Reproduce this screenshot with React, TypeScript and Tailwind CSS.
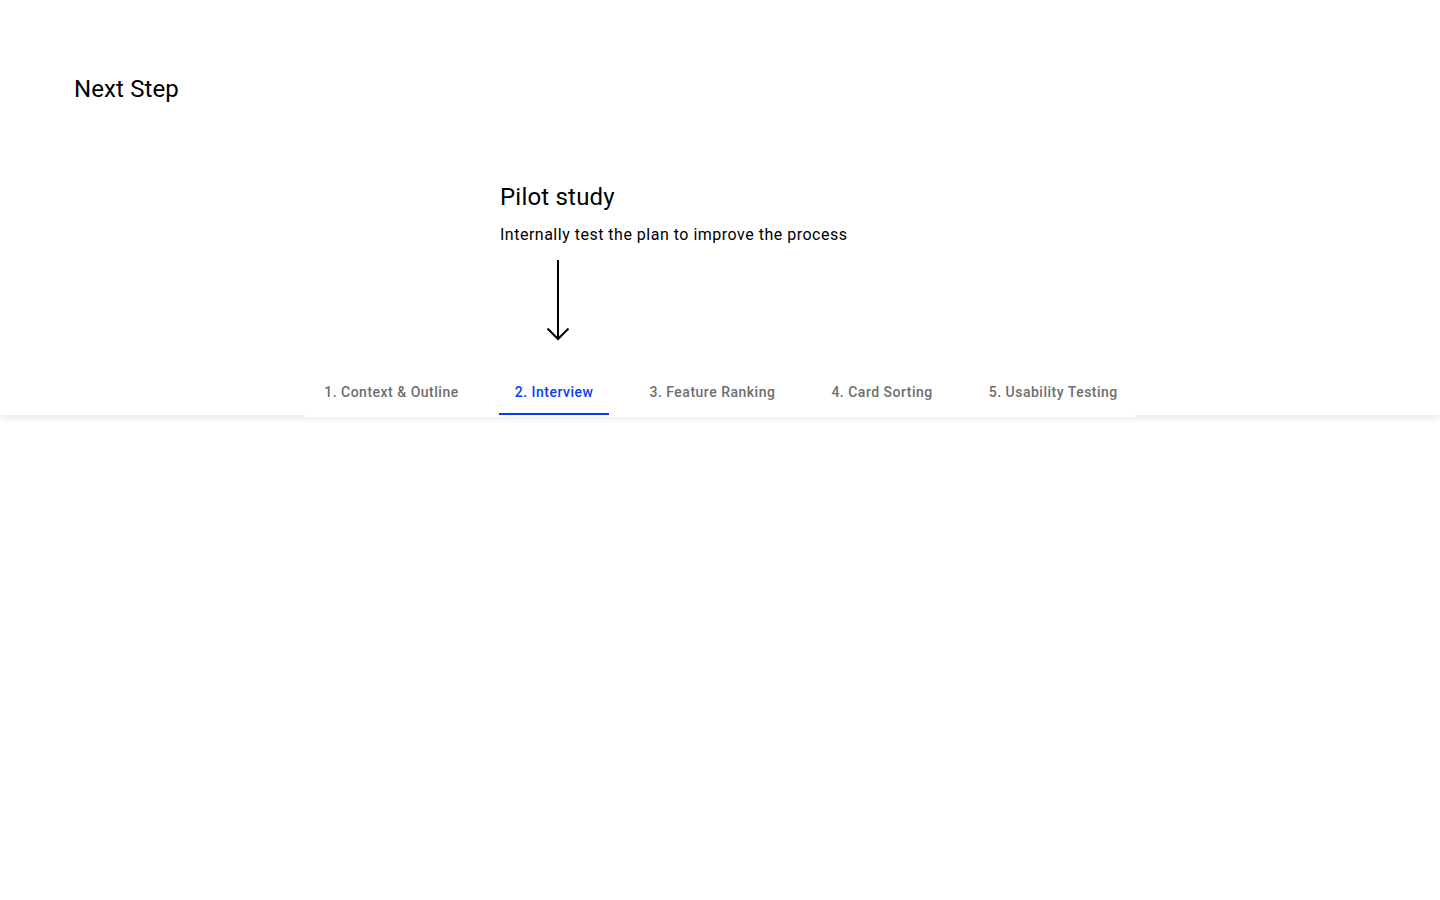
import React from "react";

const tabs = [
  "1. Context & Outline",
  "2. Interview",
  "3. Feature Ranking",
  "4. Card Sorting",
  "5. Usability Testing",
];

export default function App() {
  return (
    <div
      className="min-h-screen bg-white text-black"
      style={{ fontFamily: "Roboto, 'Noto Sans', sans-serif" }}
    >
      <div className="relative bg-white shadow-[0_3px_8px_rgba(0,0,0,0.10)]">
        <div className="pl-[74px] pt-[73px]">
          <h1 className="text-[24px] leading-[32px] font-normal tracking-[0.12px]">Next Step</h1>
        </div>
        <div className="pl-[500px] pt-[76px]">
          <h2 className="text-[24px] leading-[32px] font-normal tracking-[0.2px]">Pilot study</h2>
          <p className="mt-[10px] text-[16px] leading-[24px] tracking-[0.5px]">
            Internally test the plan to improve the process
          </p>
          <div className="mt-[13px] ml-[46px] h-[81px] w-[24px]">
            <svg width="24" height="81" viewBox="0 0 24 81" fill="none">
              <path d="M12 0 V79" stroke="black" strokeWidth="2" />
              <path
                d="M1.5 68.5 L12 79 L22.5 68.5"
                stroke="black"
                strokeWidth="2"
                strokeLinejoin="miter"
              />
            </svg>
          </div>
        </div>
        <div className="mt-[26px] flex justify-center">
          <div className="relative z-10 -mb-[2px] flex gap-6 bg-white pl-[3px] pr-[1px] pb-[2px]">
            {tabs.map((t, i) => {
              const active = i === 1;
              return (
                <div
                  key={t}
                  className={
                    active
                      ? "flex h-[48px] items-center border-b-2 border-[#0b3cf5] px-4 pt-[4px] text-[14px] font-medium tracking-[0.5px] text-[#0b3cf5]"
                      : "flex h-[48px] items-center border-b-2 border-transparent px-4 pt-[4px] text-[14px] font-medium tracking-[0.5px] text-[#6e6e6e]"
                  }
                >
                  {t}
                </div>
              );
            })}
          </div>
        </div>
      </div>
    </div>
  );
}
